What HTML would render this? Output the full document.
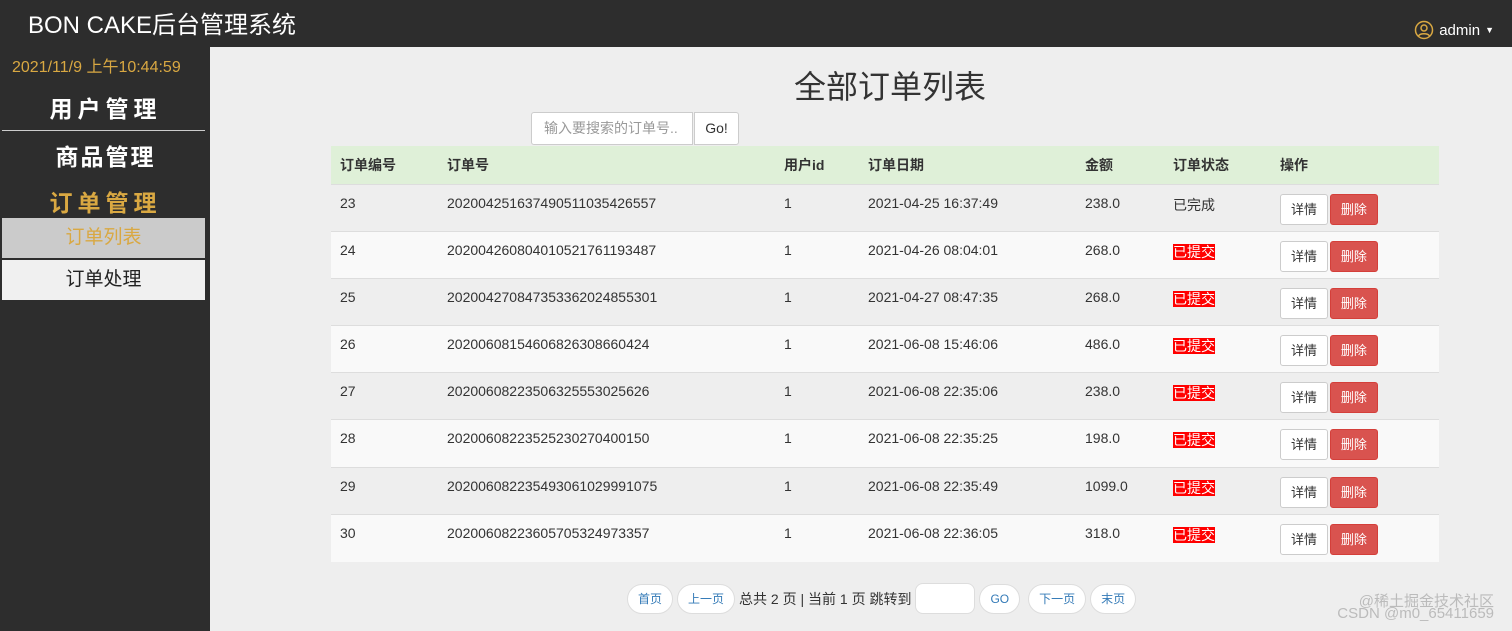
<!DOCTYPE html>
<html><head><meta charset="utf-8"><style>
*{box-sizing:border-box;margin:0;padding:0}
body{width:1512px;height:631px;overflow:hidden;background:#eeeeee;font-family:"Liberation Sans","Noto Sans CJK SC",sans-serif;font-size:14px;color:#333;position:relative}
.top{position:absolute;left:0;top:0;width:1512px;height:47px;background:#2d2d2d}
.brand{position:absolute;left:28px;top:5px;color:#fff;font-size:24px}
.user{position:absolute;right:18px;top:20px;color:#fff;font-size:15px;display:flex;align-items:center;gap:5px}
.side{position:absolute;left:0;top:47px;width:210px;height:584px;background:#2d2d2d}
.time{position:absolute;left:12px;top:53px;color:#d9a842;font-size:16px}
.m{position:absolute;left:3px;width:205px;text-align:center;font-size:23px;font-weight:bold;letter-spacing:5px}
.sub{position:absolute;left:2px;width:203px;height:40px;text-align:center;line-height:40px;font-size:19px}
h1{position:absolute;left:794px;top:62px;font-size:32px;font-weight:normal;color:#333}
.search{position:absolute;left:531px;top:112px;width:162px;height:33px;background:#fff;border:1px solid #ccc;border-radius:3px 0 0 3px;color:#999;font-size:14px;line-height:31px;padding-left:12px}
.go{position:absolute;left:694px;top:112px;width:45px;height:33px;background:#fff;border:1px solid #ccc;border-radius:0 3px 3px 0;line-height:31px;text-align:center;font-size:14px}
table{position:absolute;left:331px;top:146px;width:1108px;border-collapse:collapse}
th{background:#dff0d8;height:38px;text-align:left;font-weight:bold;padding-left:9px;font-size:14px}
td{height:47.2px;padding-left:9px;vertical-align:top;padding-top:10px;border-top:1px solid #ddd}
tr.o td{background:#eeeeee}
tr.e td{background:#f9f9f9}
.red{background:#f00;color:#fff}
.b{display:inline-block;height:31px;line-height:29px;padding:0 10px;border:1px solid #ccc;border-radius:3px;font-size:13px;background:#fff;margin-top:-1px}
.d{background:#d9534f;border-color:#d43f3a;color:#fff;margin-left:-2px}
.pg{position:absolute;top:583px;display:flex;align-items:center;gap:4px;left:627px}
.p{height:30px;line-height:28px;padding:0 10px;border:1px solid #ddd;border-radius:15px;background:#fff;color:#337ab7;font-size:12px}
.wm{position:absolute;right:18px;color:#bbb;font-size:15px;text-align:right}
</style></head><body>
<div class="top"><div class="brand">BON CAKE后台管理系统</div>
<div class="user"><svg width="20" height="20" viewBox="0 0 20 20"><circle cx="10" cy="10" r="8.5" fill="none" stroke="#d9a842" stroke-width="1.5"/><circle cx="10" cy="8" r="3" fill="none" stroke="#d9a842" stroke-width="1.5"/><path d="M4.5 16c1.5-3 9.5-3 11 0" fill="none" stroke="#d9a842" stroke-width="1.5"/></svg>admin<span style="font-size:9px">▼</span></div></div>
<div class="side"></div>
<div class="time">2021/11/9 上午10:44:59</div>
<div class="m" style="top:90px;color:#fff">用户管理</div>
<div style="position:absolute;left:2px;top:130px;width:203px;height:1px;background:#ccc"></div>
<div class="m" style="top:138px;color:#fff;letter-spacing:2px">商品管理</div>
<div class="m" style="top:184px;color:#d9a842">订单管理</div>
<div class="sub" style="top:218px;background:#cbcbcb;color:#d9a842">订单列表</div>
<div class="sub" style="top:260px;background:#f0f0f0;color:#222">订单处理</div>
<h1>全部订单列表</h1>
<div class="search">输入要搜索的订单号..</div><div class="go">Go!</div>
<table>
<tr><th style="width:107px">订单编号</th><th style="width:337px">订单号</th><th style="width:84px">用户id</th><th style="width:217px">订单日期</th><th style="width:88px">金额</th><th style="width:107px">订单状态</th><th>操作</th></tr>
<tr class="o"><td>23</td><td>202004251637490511035426557</td><td>1</td><td>2021-04-25 16:37:49</td><td>238.0</td><td>已完成</td><td><span class="b">详情</span> <span class="b d">删除</span></td></tr>
<tr class="e"><td>24</td><td>202004260804010521761193487</td><td>1</td><td>2021-04-26 08:04:01</td><td>268.0</td><td><span class="red">已提交</span></td><td><span class="b">详情</span> <span class="b d">删除</span></td></tr>
<tr class="o"><td>25</td><td>202004270847353362024855301</td><td>1</td><td>2021-04-27 08:47:35</td><td>268.0</td><td><span class="red">已提交</span></td><td><span class="b">详情</span> <span class="b d">删除</span></td></tr>
<tr class="e"><td>26</td><td>20200608154606826308660424</td><td>1</td><td>2021-06-08 15:46:06</td><td>486.0</td><td><span class="red">已提交</span></td><td><span class="b">详情</span> <span class="b d">删除</span></td></tr>
<tr class="o"><td>27</td><td>20200608223506325553025626</td><td>1</td><td>2021-06-08 22:35:06</td><td>238.0</td><td><span class="red">已提交</span></td><td><span class="b">详情</span> <span class="b d">删除</span></td></tr>
<tr class="e"><td>28</td><td>20200608223525230270400150</td><td>1</td><td>2021-06-08 22:35:25</td><td>198.0</td><td><span class="red">已提交</span></td><td><span class="b">详情</span> <span class="b d">删除</span></td></tr>
<tr class="o"><td>29</td><td>202006082235493061029991075</td><td>1</td><td>2021-06-08 22:35:49</td><td>1099.0</td><td><span class="red">已提交</span></td><td><span class="b">详情</span> <span class="b d">删除</span></td></tr>
<tr class="e"><td>30</td><td>20200608223605705324973357</td><td>1</td><td>2021-06-08 22:36:05</td><td>318.0</td><td><span class="red">已提交</span></td><td><span class="b">详情</span> <span class="b d">删除</span></td></tr>
</table>
<div class="pg"><span class="p">首页</span><span class="p">上一页</span><span style="font-size:14px">总共 2 页 | 当前 1 页 跳转到</span><span class="p" style="width:60px;border-radius:8px;height:31px"></span><span class="p">GO</span><span class="p" style="margin-left:4px">下一页</span><span class="p">末页</span></div>
<div class="wm" style="top:590px">@稀土掘金技术社区</div>
<div class="wm" style="top:605px">CSDN @m0_65411659</div>
</body></html>
